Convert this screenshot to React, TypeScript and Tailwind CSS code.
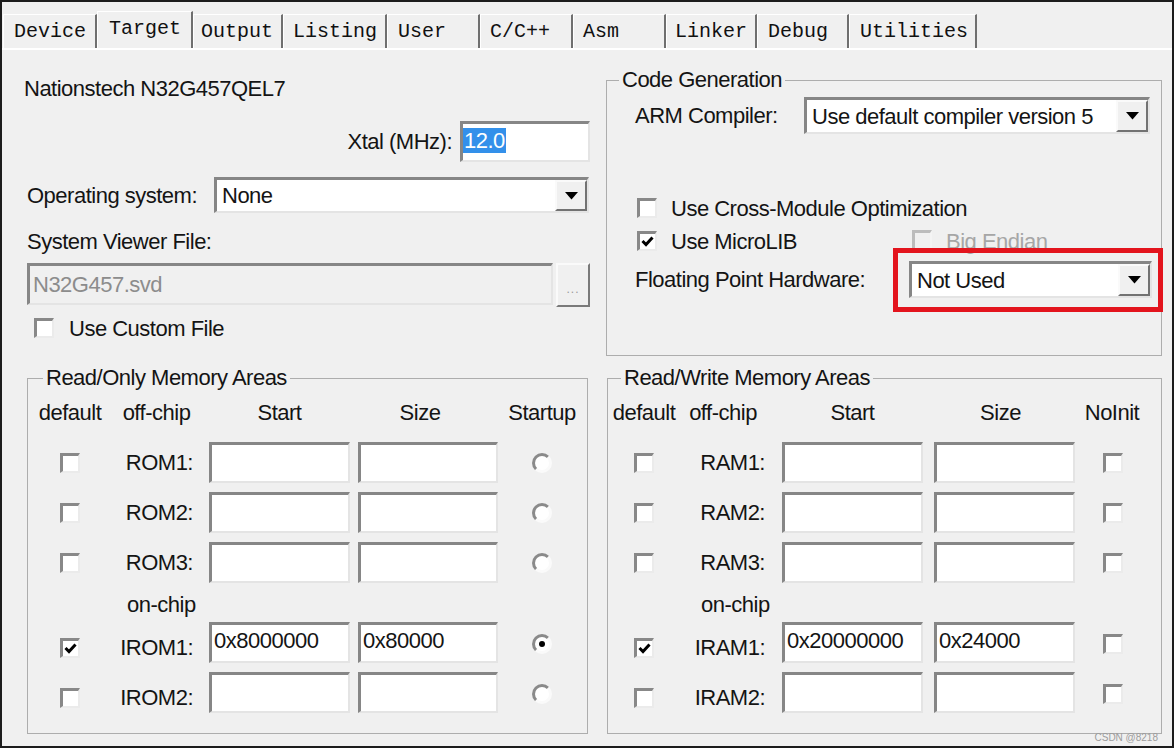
import React from "react";

const TABS = [
  { label: "Device", cls: "w-[94px] pl-[10px]" },
  { label: "Target", cls: "w-[96px] pl-[11px]", active: true },
  { label: "Output", cls: "w-[90px] pl-[7px]" },
  { label: "Listing", cls: "w-[104px] pl-[9px]" },
  { label: "User", cls: "w-[93px] pl-[10px]" },
  { label: "C/C++", cls: "w-[93px] pl-[9px]" },
  { label: "Asm", cls: "w-[93px] pl-[9px]" },
  { label: "Linker", cls: "w-[91px] pl-[8px]" },
  { label: "Debug", cls: "w-[92px] pl-[10px]" },
  { label: "Utilities", cls: "w-[128px] pl-[10px]" },
];

const sunken =
  "border-t-[3px] border-l-[3px] border-b-2 border-r-2 border-t-[#868686] border-l-[#868686] border-b-[#e4e4e4] border-r-[#e4e4e4]";

function Check({ checked = false, disabled = false }: { checked?: boolean; disabled?: boolean }) {
  return (
    <span
      className={
        disabled
          ? "flex h-[20px] w-[20px] shrink-0 items-center justify-center border-t-[3px] border-l-[3px] border-b-2 border-r-2 border-t-[#bcbcbc] border-l-[#bcbcbc] border-b-[#f4f4f4] border-r-[#f4f4f4] bg-[#f0f0f0]"
          : "flex h-[20px] w-[20px] shrink-0 items-center justify-center border-t-[3px] border-l-[3px] border-b-2 border-r-2 border-t-[#888888] border-l-[#888888] border-b-[#ebebeb] border-r-[#ebebeb] bg-white"
      }
    >
      {checked && (
        <svg width="13" height="13" viewBox="0 0 13 13">
          <path d="M1.5 6 L5 9.5 L11.5 2.5" fill="none" stroke="#000" strokeWidth="3" />
        </svg>
      )}
    </span>
  );
}

function Radio({ on = false }: { on?: boolean }) {
  return (
    <span className="flex h-[20px] w-[20px] items-center justify-center rounded-full border-[3px] border-t-[#8a8a8a] border-l-[#8a8a8a] border-b-[#fafafa] border-r-[#fafafa] bg-white">
      {on && <span className="h-[6px] w-[6px] rounded-full bg-black" />}
    </span>
  );
}

function Arrow() {
  return (
    <span className="flex h-full w-[32px] shrink-0 items-center justify-center border-2 border-t-[#fafafa] border-l-[#fafafa] border-b-[#727272] border-r-[#727272] bg-[#f0f0f0]">
      <svg width="13" height="8" viewBox="0 0 13 8">
        <polygon points="0,0 13,0 6.5,7.5" fill="#000" />
      </svg>
    </span>
  );
}

function Combo({ value, cls }: { value: string; cls: string }) {
  return (
    <div className={`flex items-stretch bg-white ${sunken} ${cls}`}>
      <span className="flex flex-1 items-center pl-[5px]">{value}</span>
      <Arrow />
    </div>
  );
}

function Field({ value = "", cls }: { value?: string; cls: string }) {
  return (
    <div className={`bg-white pl-[2px] pt-[4px] leading-[24px] ${sunken} ${cls}`}>{value}</div>
  );
}

type Row = { label: string; start?: string; size?: string; def?: boolean };

function MemoryBox({
  title,
  rows,
  lastHeader,
  radio,
  ram,
}: {
  title: string;
  rows: Row[];
  lastHeader: string;
  radio: boolean;
  ram: boolean;
}) {
  const c1 = ram ? "w-[72px]" : "w-[84px]";
  const c2 = ram ? "w-[102px] pr-[17px]" : "w-[97px] pr-[16px]";
  const c3 = "w-[141px]";
  const gap = ram ? "ml-[11px] w-[141px]" : "ml-[8px] w-[140px]";
  const c5 = ram ? "w-[76px]" : "w-[88px]";
  const offChip = rows.slice(0, 3);
  const onChip = rows.slice(3);

  const renderRow = (r: Row, i: number, chip: boolean) => (
    <div
      key={r.label}
      className={`flex h-[41px] items-center ${i === 0 && !chip ? "mt-[18px]" : i === 0 ? "mt-[5px]" : "mt-[9px]"}`}
    >
      <div className={`flex justify-center ${c1} ${chip ? "mt-[10px]" : ""}`}>
        <Check checked={r.def} />
      </div>
      <div className={`text-right ${c2} ${chip ? "mt-[10px]" : ""}`}>{r.label}</div>
      <Field value={r.start} cls={`h-[41px] ${c3}`} />
      <Field value={r.size} cls={`h-[41px] ${gap}`} />
      <div className={`flex justify-center ${c5} ${chip ? "mt-[2px]" : ""}`}>
        {radio ? <Radio on={r.def} /> : <Check />}
      </div>
    </div>
  );

  return (
    <fieldset className="h-[368px] border border-[#adadad]">
      <legend className={`${ram ? "ml-[13px]" : "ml-[15px]"} px-[3px] leading-[24px]`}>{title}</legend>
      <div className="mt-[10px] flex h-[24px] items-center">
        <div className={`text-center ${c1}`}>default</div>
        <div className={`text-center ${ram ? "w-[102px] pr-[16px]" : "w-[97px] pr-[8px]"}`}>off-chip</div>
        <div className={`text-center ${c3}`}>Start</div>
        <div className={`text-center ${ram ? "ml-[11px] w-[141px] pr-[8px]" : "ml-[8px] w-[140px] pr-[16px]"}`}>
          Size
        </div>
        <div className={`text-center ${c5} ${ram ? "pr-[2px]" : ""}`}>{lastHeader}</div>
      </div>
      {offChip.map((r, i) => renderRow(r, i, false))}
      <div className={`mt-[10px] h-[24px] leading-[24px] ${ram ? "pl-[93px]" : "pl-[99px]"}`}>on-chip</div>
      {onChip.map((r, i) => renderRow(r, i, true))}
    </fieldset>
  );
}

export default function App() {
  return (
    <div className="relative flex h-[748px] w-[1174px] flex-col whitespace-nowrap border-2 border-[#1c1c1c] bg-[#f0f0f0] font-['Liberation_Sans',Arial,sans-serif] text-[22px] tracking-[-0.5px] text-[#141414]">
      {/* tab strip */}
      <div className="mt-[9px] flex h-[37px] pl-[1px] font-['Liberation_Mono',monospace] text-[20px] tracking-normal text-[#111]">
        {TABS.map((t) =>
          t.active ? (
            <div
              key={t.label}
              className={`flex h-[37px] items-center border-t border-l border-white border-r-2 border-r-[#6f6f6f] pb-[3px] ${t.cls}`}
            >
              {t.label}
            </div>
          ) : (
            <div
              key={t.label}
              className={`mt-[3px] flex h-[34px] items-center border-t border-l border-white border-r-2 border-r-[#6f6f6f] ${t.cls}`}
            >
              {t.label}
            </div>
          )
        )}
      </div>

      {/* tab page */}
      <div className="flex-1 border-t-2 border-white pl-[22px] pt-[18px]">
        <div className="flex">
          {/* left column */}
          <div className="flex w-[568px] flex-col">
            <div className="mt-[9px] h-[24px] leading-[24px]">Nationstech N32G457QEL7</div>
            <div className="mt-[20px] flex items-center justify-end pr-[2px]">
              <span>Xtal (MHz):</span>
              <div className={`ml-[8px] flex h-[41px] w-[130px] items-start bg-white pt-[4px] ${sunken}`}>
                <span className="bg-[#3390ea] px-[1px] leading-[25px] text-white">12.0</span>
              </div>
            </div>
            <div className="mt-[15px] flex items-center">
              <span className="w-[190px] pl-[3px]">Operating system:</span>
              <Combo value="None" cls="h-[36px] w-[375px]" />
            </div>
            <div className="mt-[17px] h-[24px] pl-[3px] leading-[24px]">System Viewer File:</div>
            <div className="mt-[9px] flex items-start">
              <div
                className={`ml-[3px] flex h-[42px] w-[526px] items-center bg-[#f0f0f0] pl-[3px] text-[#8c8c8c] ${sunken}`}
              >
                N32G457.svd
              </div>
              <div className="ml-[3px] flex h-[44px] w-[34px] items-center justify-center border-2 border-t-[#fafafa] border-l-[#fafafa] border-b-[#7a7a7a] border-r-[#7a7a7a] bg-[#f0f0f0] pt-[8px] text-[12px] tracking-[1px] text-[#9a9a9a]">
                ...
              </div>
            </div>
            <div className="mt-[9px] flex h-[24px] items-center">
              <span className="ml-[10px]">
                <Check />
              </span>
              <span className="ml-[15px]">Use Custom File</span>
            </div>
          </div>

          {/* code generation */}
          <fieldset className="ml-[14px] h-[288px] w-[556px] border border-[#adadad]">
            <legend className="ml-[12px] px-[3px] leading-[24px]">Code Generation</legend>
            <div className="mt-[5px] flex items-center pl-[28px]">
              <span className="w-[169px]">ARM Compiler:</span>
              <Combo value="Use default compiler version 5" cls="h-[37px] w-[346px]" />
            </div>
            <div className="mt-[63px] flex h-[22px] items-center pl-[30px]">
              <Check />
              <span className="ml-[14px]">Use Cross-Module Optimization</span>
            </div>
            <div className="mt-[11px] flex h-[22px] items-center pl-[30px]">
              <div className="flex w-[275px] items-center">
                <Check checked />
                <span className="ml-[14px]">Use MicroLIB</span>
              </div>
              <span className="-mt-[3px]">
                <Check disabled />
              </span>
              <span className="ml-[14px] text-[#a6a6a6]">Big Endian</span>
            </div>
            <div className="mt-[9px] flex items-center pl-[28px]">
              <span className="w-[274px]">Floating Point Hardware:</span>
              <div className="relative">
                <Combo value="Not Used" cls="h-[37px] w-[243px]" />
                <div className="absolute -top-[13px] -right-[11px] -bottom-[14px] -left-[16px] z-10 border-[5px] border-[#e3141d]" />
              </div>
            </div>
          </fieldset>
        </div>

        {/* memory areas */}
        <div className="mt-[10px] flex">
          <div className="ml-[3px] w-[561px]">
            <MemoryBox
              title="Read/Only Memory Areas"
              lastHeader="Startup"
              radio
              ram={false}
              rows={[
                { label: "ROM1:" },
                { label: "ROM2:" },
                { label: "ROM3:" },
                { label: "IROM1:", start: "0x8000000", size: "0x80000", def: true },
                { label: "IROM2:" },
              ]}
            />
          </div>
          <div className="ml-[19px] w-[555px]">
            <MemoryBox
              title="Read/Write Memory Areas"
              lastHeader="NoInit"
              radio={false}
              ram
              rows={[
                { label: "RAM1:" },
                { label: "RAM2:" },
                { label: "RAM3:" },
                { label: "IRAM1:", start: "0x20000000", size: "0x24000", def: true },
                { label: "IRAM2:" },
              ]}
            />
          </div>
        </div>
      </div>

      <span className="absolute right-[14px] bottom-[2px] text-[10px] leading-[12px] tracking-normal text-[#9c9c9c]">
        CSDN @8218
      </span>
    </div>
  );
}
